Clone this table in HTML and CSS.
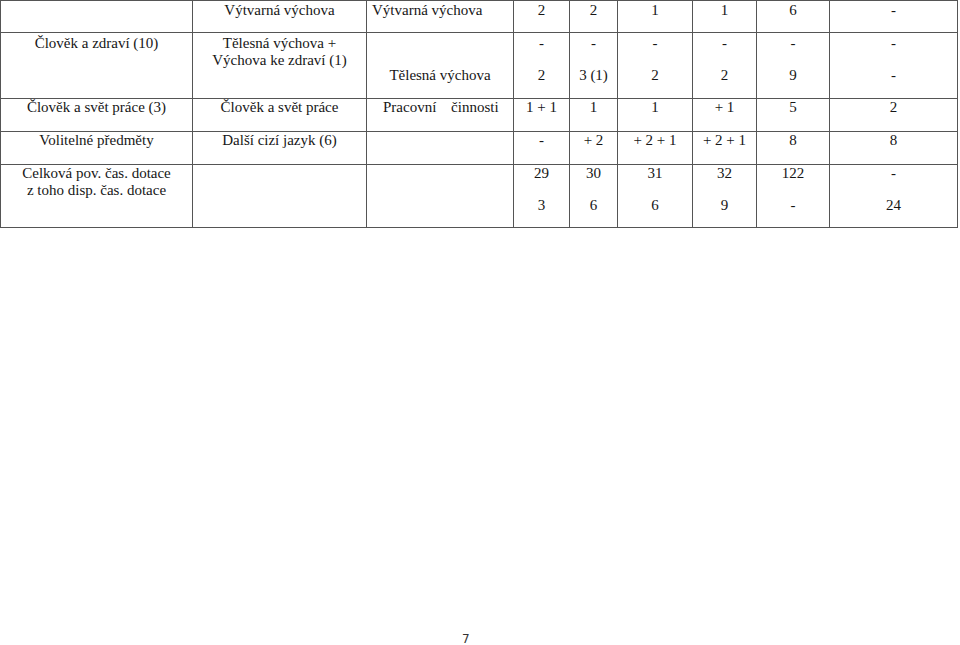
FILE: index.html
```html
<!DOCTYPE html>
<html lang="cs">
<head>
<meta charset="utf-8">
<title>Učební plán</title>
<link rel="stylesheet" href="styles.css">
</head>
<body>
<div class="page">
  <table class="plan">
    <colgroup>
      <col class="c1"><col class="c2"><col class="c3"><col class="c4"><col class="c5"><col class="c6"><col class="c7"><col class="c8"><col class="c9">
    </colgroup>
    <tr class="r1">
      <td></td>
      <td>Výtvarná výchova</td>
      <td class="left">Výtvarná výchova</td>
      <td>2</td><td>2</td><td>1</td><td>1</td><td>6</td><td>-</td>
    </tr>
    <tr class="r2">
      <td>Člověk a zdraví (10)</td>
      <td>Tělesná výchova +<br>Výchova ke zdraví (1)</td>
      <td><div class="l1">&nbsp;</div><div class="l2">Tělesná výchova</div></td>
      <td><div class="l1">-</div><div class="l2">2</div></td>
      <td><div class="l1">-</div><div class="l2">3 (1)</div></td>
      <td><div class="l1">-</div><div class="l2">2</div></td>
      <td><div class="l1">-</div><div class="l2">2</div></td>
      <td><div class="l1">-</div><div class="l2">9</div></td>
      <td><div class="l1">-</div><div class="l2">-</div></td>
    </tr>
    <tr class="r3">
      <td>Člověk a svět práce (3)</td>
      <td>Člověk a svět práce</td>
      <td class="wide">Pracovní činnosti</td>
      <td>1 + 1</td><td>1</td><td>1</td><td>+ 1</td><td>5</td><td>2</td>
    </tr>
    <tr class="r4">
      <td>Volitelné předměty</td>
      <td>Další cizí jazyk (6)</td>
      <td></td>
      <td>-</td><td>+ 2</td><td>+ 2 + 1</td><td>+ 2 + 1</td><td>8</td><td>8</td>
    </tr>
    <tr class="r5">
      <td>Celková pov. čas. dotace<br>z toho disp. čas. dotace</td>
      <td></td>
      <td></td>
      <td><div class="l1">29</div><div class="l2">3</div></td>
      <td><div class="l1">30</div><div class="l2">6</div></td>
      <td><div class="l1">31</div><div class="l2">6</div></td>
      <td><div class="l1">32</div><div class="l2">9</div></td>
      <td><div class="l1">122</div><div class="l2">-</div></td>
      <td><div class="l1">-</div><div class="l2">24</div></td>
    </tr>
  </table>
  <div class="footer">7</div>
</div>
</body>
</html>
```

FILE: styles.css
```css
html, body {
  margin: 0;
  padding: 0;
  background: #ffffff;
}

.page {
  width: 960px;
  height: 645px;
  display: flex;
  flex-direction: column;
  overflow: hidden;
}

.plan {
  border-collapse: collapse;
  table-layout: fixed;
  width: 958px;
  font-family: "Liberation Serif", "Times New Roman", serif;
  font-size: 15px;
  line-height: 17px;
  color: #161616;
}

.c1 { width: 192px; }
.c2 { width: 174px; }
.c3 { width: 147px; }
.c4 { width: 56px; }
.c5 { width: 48px; }
.c6 { width: 75px; }
.c7 { width: 64px; }
.c8 { width: 73px; }
.c9 { width: 128px; }

.plan td {
  border: 1px solid #555555;
  padding: 0 2px;
  text-align: center;
  vertical-align: top;
  white-space: nowrap;
}

.plan .left {
  text-align: left;
  padding-left: 5px;
}

.plan .wide {
  text-align: left;
  word-spacing: 11px;
  padding-left: 16px;
}

.r1 { height: 32px; }
.r1 td { padding-top: 1px; }
.r2 { height: 66px; }
.r2 td { padding-top: 2px; }
.r3 { height: 33px; }
.r4 { height: 33px; }
.r5 { height: 63px; }

.l2 {
  margin-top: 15px;
}

.footer {
  margin-top: auto;
  margin-bottom: -3px;
  padding-left: 462px;
  height: 17px;
  font-family: "DejaVu Sans", "Liberation Sans", sans-serif;
  font-size: 12px;
  line-height: 17px;
  color: #333333;
}
```
